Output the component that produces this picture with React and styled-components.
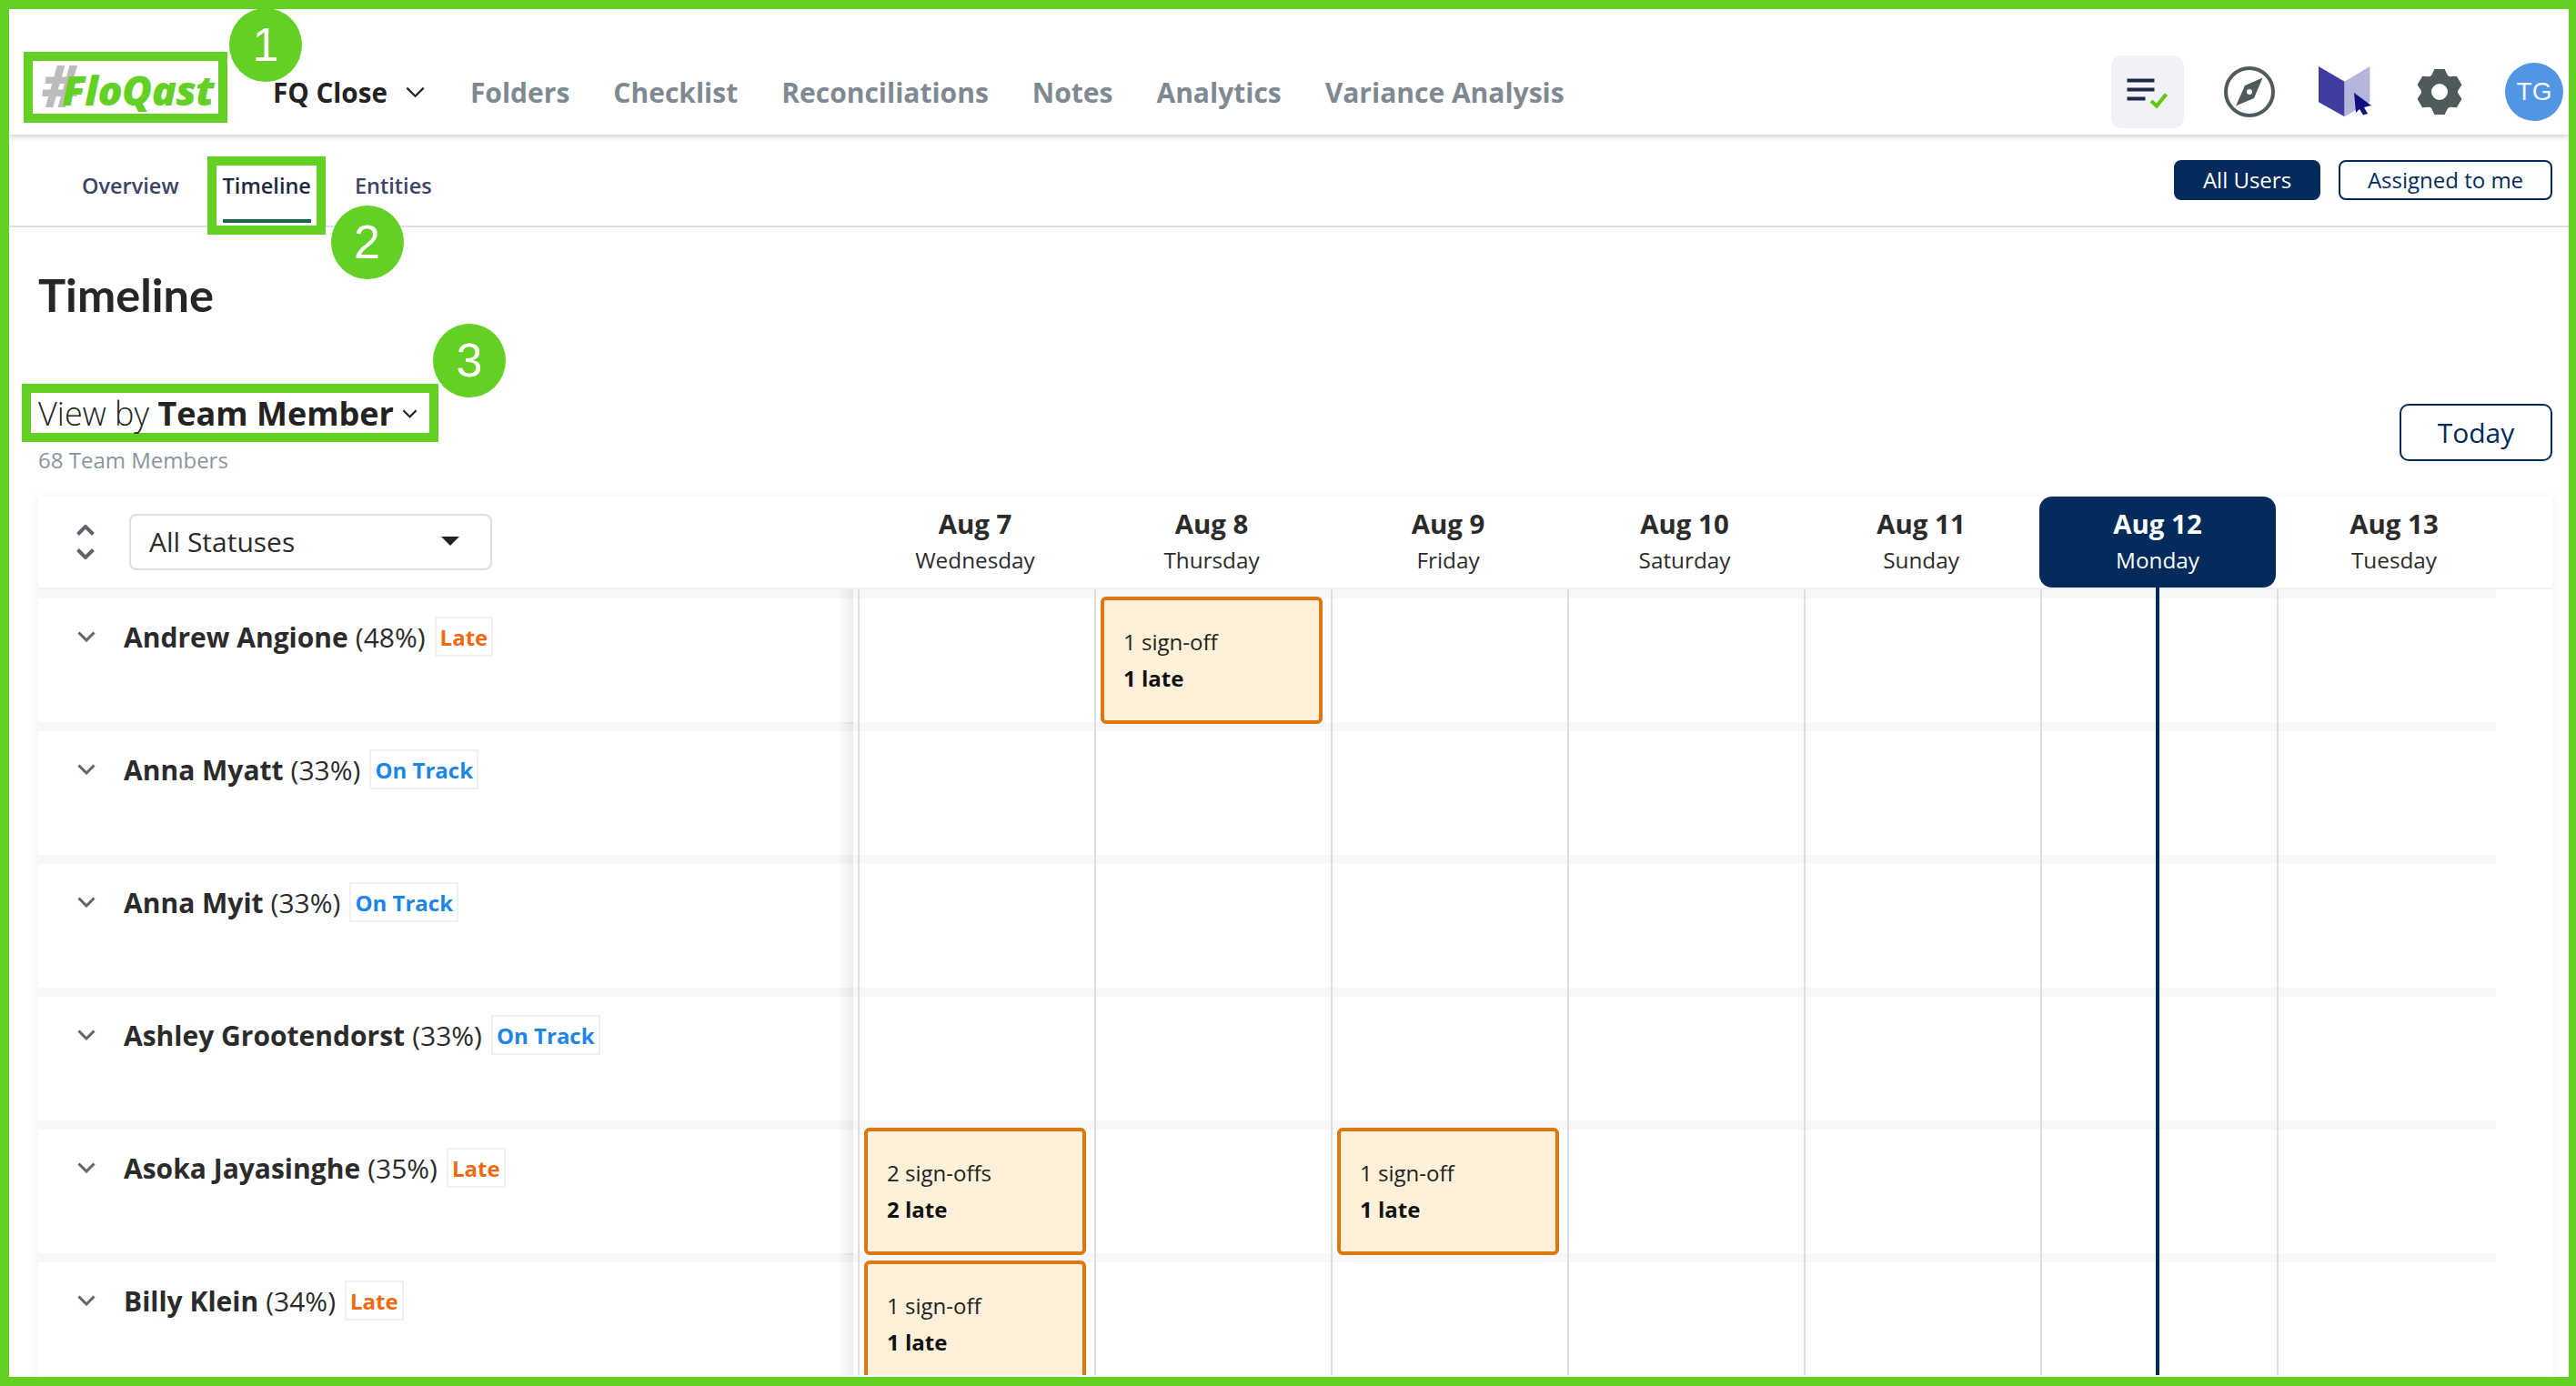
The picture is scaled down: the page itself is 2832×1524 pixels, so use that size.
import React from 'react';
import styled, { createGlobalStyle } from 'styled-components';

const GlobalStyle = createGlobalStyle`
  html, body {
    margin: 0;
    padding: 0;
    background: white;
    font-family: 'Open Sans', 'Noto Sans', sans-serif;
    color: #2b2b2b;
  }
  * {
    box-sizing: border-box;
  }
`;

const green = '#62d024';
const navy = '#022b5c';

const Frame = styled.div`
  width: 2832px;
  height: 1524px;
  border: solid ${green};
  border-width: 10px 8px 10px 10px;
  background: white;
  overflow: hidden;
`;

const Header = styled.header`
  height: 138px;
  padding: 44px 6px 0 16px;
  display: flex;
  align-items: center;
  box-shadow: 0 2px 6px rgba(0, 0, 0, 0.2);
  position: relative;
`;

const LogoBox = styled.div`
  position: relative;
  width: 224px;
  height: 78px;
  margin-bottom: 10px;
  border: 10px solid ${green};
  display: flex;
  align-items: center;
  padding-left: 10px;
  white-space: nowrap;
`;

const LogoHash = styled.span`
  font: italic 800 64px/58px 'Open Sans', sans-serif;
  color: #bcbcbc;
  margin-top: -5px;
`;

const LogoName = styled.span`
  font: italic 800 45px/58px 'Open Sans', sans-serif;
  letter-spacing: -0.6px;
  color: ${green};
  margin-left: -19px;
  margin-top: 5px;
`;

const Marker = styled.span`
  position: absolute;
  left: ${p => p.$left}px;
  top: ${p => p.$top}px;
  width: 80px;
  height: 81px;
  border-radius: 50%;
  background: ${green};
  color: white;
  font: 400 52px/81px 'Liberation Sans', sans-serif;
  text-align: center;
  z-index: 5;
`;

const Module = styled.div`
  display: flex;
  align-items: center;
  gap: 19px;
  margin-left: 50px;
  margin-right: 49px;
  font-size: 29.6px;
  font-weight: 700;
  color: #222;
`;

const MainNav = styled.nav`
  display: flex;
  gap: 48px;
  flex: 1;
`;

const NavLink = styled.a`
  font-size: 30px;
  font-weight: 700;
  color: #7f8992;
`;

const IconBar = styled.div`
  display: flex;
  align-items: center;
`;

const TaskButton = styled.div`
  width: 80px;
  height: 80px;
  border-radius: 12px;
  background: #f1f2f8;
  margin-right: 44px;
`;

const IconSlot = styled.div`
  display: flex;
  align-items: center;
  justify-content: center;
  width: ${p => p.$w}px;
  margin-right: ${p => p.$mr}px;
`;

const Avatar = styled.div`
  width: 64px;
  height: 64px;
  border-radius: 50%;
  background: #5295e3;
  color: #f2f6fc;
  font: 400 28px/64px 'Liberation Sans', sans-serif;
  text-align: center;
`;

const SubNav = styled.div`
  height: 102px;
  border-bottom: 2px solid #dedede;
  padding: 0 18px 0 80px;
  display: flex;
  justify-content: space-between;
`;

const Tabs = styled.div`
  display: flex;
  gap: 48px;
`;

const Tab = styled.a`
  position: relative;
  height: 97px;
  padding-top: 39px;
  font-size: 23.5px;
  line-height: 34px;
  font-weight: 600;
  color: ${p => (p.$active ? '#1f2845' : '#3d4466')};
  border-bottom: 4px solid ${p => (p.$active ? '#176b4c' : 'transparent')};
`;

const TabHighlight = styled.span`
  position: absolute;
  left: -17px;
  right: -16px;
  top: 24px;
  height: 86px;
  border: 10px solid ${green};
  z-index: 4;
`;

const Toggles = styled.div`
  display: flex;
  gap: 20px;
  padding-top: 28px;
`;

const Toggle = styled.button`
  height: 44px;
  width: ${p => p.$w}px;
  padding: 0;
  border-radius: 8px;
  border: 2px solid ${navy};
  background: ${p => (p.$on ? navy : 'white')};
  color: ${p => (p.$on ? 'white' : navy)};
  font: 400 24px/38px 'Open Sans', sans-serif;
`;

const Content = styled.main`
  padding: 0 18px 0 32px;
`;

const Title = styled.h1`
  margin: 42px 0 66px;
  font-family: Lato, 'Open Sans', sans-serif;
  font-size: 50.5px;
  line-height: 64px;
  font-weight: 700;
  color: #262626;
`;

const Toolbar = styled.div`
  display: flex;
  justify-content: space-between;
  align-items: flex-start;
  height: 124px;
`;

const ViewBox = styled.div`
  position: relative;
  width: 458px;
  height: 64px;
  margin-left: -18px;
  padding: 2px 0 0 8px;
  border: 10px solid ${green};
  display: flex;
  align-items: center;
  gap: 9px;
  font-size: 36px;
  line-height: 44px;
  white-space: nowrap;
  font-weight: 300;
  color: #222;
  b {
    font-weight: 700;
  }
`;

const Count = styled.div`
  margin-top: 3px;
  font-size: 24px;
  line-height: 34px;
  color: #8a949e;
`;

const TodayButton = styled.button`
  margin-top: 22px;
  width: 168px;
  height: 63px;
  border: 2px solid ${navy};
  border-radius: 10px;
  background: white;
  color: ${navy};
  font: 400 30px/40px 'Open Sans', sans-serif;
  padding: 0;
`;

const Panel = styled.section`
  height: 966px;
  background: white;
  box-shadow: 0 2px 10px rgba(0, 0, 0, 0.08);
  overflow: hidden;
`;

const HeadRow = styled.div`
  display: grid;
  grid-template-columns: 901px repeat(7, 260px);
  height: 102px;
  border-bottom: 2px solid #eef0f4;
`;

const HeadLeft = styled.div`
  padding: 19px 0 0 42px;
  display: flex;
  align-items: flex-start;
  gap: 38px;
`;

const Stepper = styled.div`
  width: 20px;
  height: 62px;
  display: flex;
  flex-direction: column;
  justify-content: center;
  gap: 14px;
`;

const Select = styled.div`
  width: 399px;
  height: 62px;
  border: 2px solid #dfdfe1;
  border-radius: 8px;
  padding: 0 34px 2px 20px;
  display: flex;
  align-items: center;
  justify-content: space-between;
  font-size: 30px;
  color: #2b2b2b;
`;

const Caret = styled.span`
  width: 0;
  height: 0;
  border-left: 10px solid transparent;
  border-right: 10px solid transparent;
  border-top: 10px solid #222;
`;

const DateCol = styled.div`
  height: 100px;
  margin-left: -1px;
  margin-right: 1px;
  border-radius: 14px;
  padding-top: 10px;
  text-align: center;
  background: ${p => (p.$today ? navy : 'transparent')};
  color: ${p => (p.$today ? 'white' : '#2b2b2b')};
  strong {
    display: block;
    font-size: 29.4px;
    line-height: 40px;
    font-weight: 700;
  }
  span {
    display: block;
    margin-top: 2px;
    font-size: 24.3px;
    line-height: 36px;
  }
`;

const Row = styled.div`
  display: grid;
  grid-template-columns: 896px 5px repeat(6, 260px) 241px;
  width: 2702px;
  height: 146px;
  box-shadow: inset 0 10px 0 #f6f7f8;
`;

const NameCell = styled.div`
  padding: 30px 0 0 43px;
  background: linear-gradient(to left, rgba(0, 0, 0, 0.07), transparent 16px);
  display: flex;
  align-items: flex-start;
`;

const NameLine = styled.div`
  height: 44px;
  display: flex;
  align-items: center;
  font-size: 30px;
  white-space: nowrap;
  color: #2b2b2b;
  strong {
    font-weight: 700;
    margin-left: 31px;
    margin-right: 8px;
  }
`;

const Status = styled.span`
  margin-left: 10px;
  height: 44px;
  padding: 0 4px;
  border: 2px solid #eef1f4;
  font-size: 24px;
  line-height: 41px;
  font-weight: 700;
  color: ${p => (p.$late ? '#f0690f' : '#1b85e8')};
`;

const DayCell = styled.div`
  position: relative;
  border-left: 2px solid #dddddf;
  padding: 8px 0 0 5px;
  ${p =>
    p.$today &&
    `&::after {
      content: '';
      position: absolute;
      left: 125px;
      top: -2px;
      bottom: 0;
      width: 4px;
      background: ${navy};
    }`}
`;

const Card = styled.div`
  position: relative;
  z-index: 1;
  width: 244px;
  height: 140px;
  border: 4px solid #dd7711;
  border-radius: 6px;
  background: #fff0d9;
  padding: 26px 0 0 21px;
  font-size: 24px;
  line-height: 40px;
  color: #222;
  b {
    display: block;
    font-weight: 700;
    color: #111;
  }
`;

const Chevron = ({ width = 20, height = 12, color = '#5d6670', stroke = 3, up }) => (
  <svg width={width} height={height} viewBox="0 0 20 12" fill="none" style={up ? { transform: 'scaleY(-1)' } : undefined}>
    <polyline points="1.5,1.5 10,10 18.5,1.5" stroke={color} strokeWidth={stroke} />
  </svg>
);

const TaskIcon = () => (
  <svg width="80" height="80" viewBox="0 0 80 80" fill="none">
    <path d="M17.5 27.5h30M17.5 37.5h30M17.5 47.5h20" stroke="#1f2845" strokeWidth="4" />
    <path d="M44 50l6 5.5 10.5-13" stroke="#62c50f" strokeWidth="4" />
  </svg>
);

const CompassIcon = () => (
  <svg width="56" height="56" viewBox="0 0 56 56" fill="none">
    <circle cx="28" cy="28" r="26" stroke="#4f5a5c" strokeWidth="4" />
    <path d="M42.5 12.5L33 35 13 43.5 23 21z" fill="#4f5a5c" />
    <circle cx="28" cy="28" r="3" fill="white" />
  </svg>
);

const BookIcon = () => (
  <svg width="60" height="56" viewBox="0 0 60 56">
    <path d="M0 0l28.6 16.7v38.6L0 39.3z" fill="#3f3da0" />
    <path d="M28.6 16.7L56.4 0v39L28.6 55.3z" fill="#b5b5dc" />
    <path d="M39 29l19 14-8 2 4 7-5 1.5-4-6.5-4 4z" fill="#12107f" />
  </svg>
);

// six flat teeth around a round hole, one tooth pointing straight up
const gearPath = () => {
  const c = 26;
  const outline = [];
  for (let k = 0; k < 6; k++) {
    const a = (k * Math.PI) / 3;
    [[18, -9], [25, -5.6], [25, 5.6], [18, 9]].forEach(([r, t]) => {
      const x = c + t * Math.cos(a) + r * Math.sin(a);
      const y = c + t * Math.sin(a) - r * Math.cos(a);
      outline.push(`${x.toFixed(2)} ${y.toFixed(2)}`);
    });
  }
  return `M${outline.join('L')}z M${c - 9} ${c}a9 9 0 1 0 18 0a9 9 0 1 0-18 0z`;
};

const GearIcon = () => (
  <svg width="52" height="52" viewBox="0 0 52 52">
    <path d={gearPath()} fill="#4f5a5c" fillRule="evenodd" />
  </svg>
);

const navLinks = ['Folders', 'Checklist', 'Reconciliations', 'Notes', 'Analytics', 'Variance Analysis'];

const days = [
  ['Aug 7', 'Wednesday'],
  ['Aug 8', 'Thursday'],
  ['Aug 9', 'Friday'],
  ['Aug 10', 'Saturday'],
  ['Aug 11', 'Sunday'],
  ['Aug 12', 'Monday'],
  ['Aug 13', 'Tuesday'],
];

const TODAY = 5;

const members = [
  { name: 'Andrew Angione', pct: 48, late: true, cards: { 1: 1 } },
  { name: 'Anna Myatt', pct: 33 },
  { name: 'Anna Myit', pct: 33 },
  { name: 'Ashley Grootendorst', pct: 33 },
  { name: 'Asoka Jayasinghe', pct: 35, late: true, cards: { 0: 2, 2: 1 } },
  { name: 'Billy Klein', pct: 34, late: true, cards: { 0: 1 } },
];

export default function App() {
  return (
    <Frame>
      <GlobalStyle />
      <Header>
        <LogoBox>
          <LogoHash>#</LogoHash>
          <LogoName>FloQast</LogoName>
          <Marker $left={216} $top={-58}>1</Marker>
        </LogoBox>
        <Module>
          FQ Close
          <Chevron width={23} height={13} color="#222" stroke={2} />
        </Module>
        <MainNav>
          {navLinks.map(link => (
            <NavLink key={link}>{link}</NavLink>
          ))}
        </MainNav>
        <IconBar>
          <TaskButton>
            <TaskIcon />
          </TaskButton>
          <IconSlot $w={56} $mr={48}>
            <CompassIcon />
          </IconSlot>
          <IconSlot $w={60} $mr={47}>
            <BookIcon />
          </IconSlot>
          <IconSlot $w={52} $mr={46}>
            <GearIcon />
          </IconSlot>
          <Avatar>TG</Avatar>
        </IconBar>
      </Header>

      <SubNav>
        <Tabs>
          <Tab>Overview</Tab>
          <Tab $active>
            Timeline
            <TabHighlight />
            <Marker $left={119} $top={78}>2</Marker>
          </Tab>
          <Tab>Entities</Tab>
        </Tabs>
        <Toggles>
          <Toggle $on $w={161}>All Users</Toggle>
          <Toggle $w={235}>Assigned to me</Toggle>
        </Toggles>
      </SubNav>

      <Content>
        <Title>Timeline</Title>
        <Toolbar>
          <div>
            <ViewBox>
              <span>
                View by <b>Team Member</b>
              </span>
              <Chevron width={17} height={10} color="#222" stroke={2.6} />
              <Marker $left={442} $top={-76}>3</Marker>
            </ViewBox>
            <Count>68 Team Members</Count>
          </div>
          <TodayButton>Today</TodayButton>
        </Toolbar>

        <Panel>
          <HeadRow>
            <HeadLeft>
              <Stepper>
                <Chevron color="#5d6670" stroke={4} up />
                <Chevron color="#5d6670" stroke={4} />
              </Stepper>
              <Select>
                All Statuses
                <Caret />
              </Select>
            </HeadLeft>
            {days.map(([date, weekday], i) => (
              <DateCol key={date} $today={i === TODAY}>
                <strong>{date}</strong>
                <span>{weekday}</span>
              </DateCol>
            ))}
          </HeadRow>
          {members.map(m => (
            <Row key={m.name}>
              <NameCell>
                <NameLine>
                  <Chevron />
                  <strong>{m.name}</strong>({m.pct}%)
                  <Status $late={m.late}>{m.late ? 'Late' : 'On Track'}</Status>
                </NameLine>
              </NameCell>
              <div />
              {days.map(([date], i) => {
                const count = m.cards && m.cards[i];
                return (
                  <DayCell key={date} $today={i === TODAY}>
                    {count && (
                      <Card>
                        {count} sign-off{count > 1 ? 's' : ''}
                        <b>{count} late</b>
                      </Card>
                    )}
                  </DayCell>
                );
              })}
            </Row>
          ))}
        </Panel>
      </Content>
    </Frame>
  );
}
